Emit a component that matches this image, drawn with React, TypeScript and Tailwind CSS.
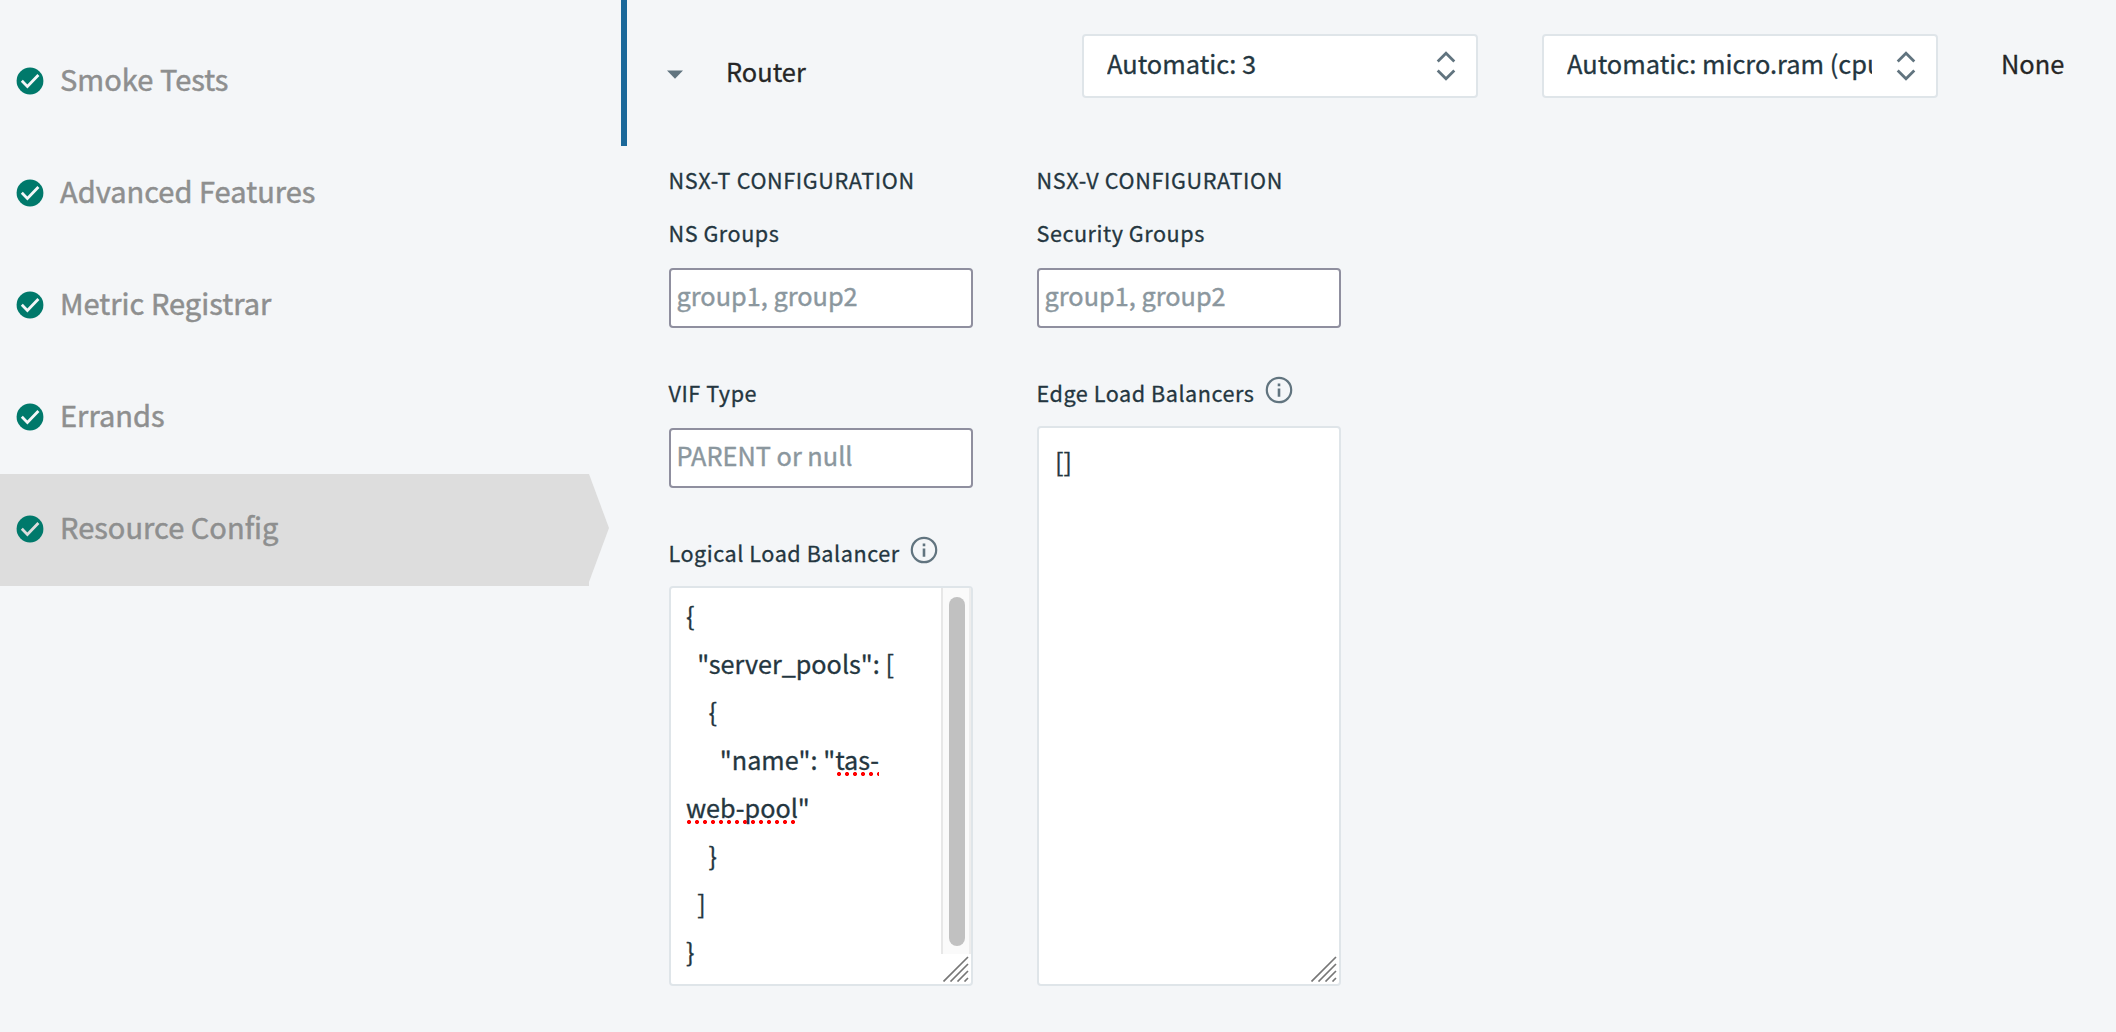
import React from "react";

const steps = [
  { label: "Smoke Tests" },
  { label: "Advanced Features" },
  { label: "Metric Registrar" },
  { label: "Errands" },
  { label: "Resource Config", active: true },
];

function CheckBadge({ active }: { active?: boolean }) {
  return (
    <svg className="mt-[41px] ml-4 size-7 shrink-0" viewBox="-14 -14 28 28" fill="none">
      <circle r="13.4" fill="#00796b" />
      <path d="M-8.2-.2-2.6 5.4 8.4-6" stroke={active ? "#dddddd" : "#f4f6f8"} strokeWidth="2.8" />
    </svg>
  );
}

function Sidebar() {
  return (
    <nav className="w-[621px] shrink-0 pt-[26px]">
      {steps.map((s) => (
        <div key={s.label} className="flex h-28 text-[29px] leading-10 tracking-[0.03px] text-[#8e8f8f] [-webkit-text-stroke:0.5px_#8e8f8f]">
          <div className={s.active ? "flex w-[589px] bg-[#dddddd]" : "flex w-[589px]"}>
            <CheckBadge active={s.active} />
            <span className="ml-4 pt-8">{s.label}</span>
          </div>
          {s.active && (
            <svg className="h-28 w-5" viewBox="0 0 20 112">
              <path d="M0 0 20 54 0 108Z" fill="#dddddd" />
            </svg>
          )}
        </div>
      ))}
    </nav>
  );
}

function Select({ value }: { value: string }) {
  return (
    <div className="flex h-16 w-[396px] shrink-0 rounded border-2 border-[#dfe5e9] bg-white pl-[23px] text-[#243640]">
      <div className="w-[305px] overflow-hidden pt-[3px] whitespace-nowrap">{value}</div>
      <svg className="mt-3.5 ml-6 h-8 w-5" viewBox="0 0 20 32" fill="none" stroke="#61747f" strokeWidth="2.8">
        <path d="M1.7 11.4 10 3.3 18.3 11.4M1.7 20.6 10 28.7 18.3 20.6" />
      </svg>
    </div>
  );
}

function Label({ children, info }: { children: string; info?: boolean }) {
  return (
    <div className="-ml-[0.5px] flex h-[31px] text-[21.6px] leading-[31px] tracking-[0.54px]">
      {children}
      {info && (
        <svg className="-mt-px ml-[10px] size-7" viewBox="-14 -14 28 28" fill="none" stroke="#61747f">
          <circle r="12.2" strokeWidth="2.2" />
          <path d="M0-6.6V-3.8M0-1.6V6.7" strokeWidth="2.6" />
        </svg>
      )}
    </div>
  );
}

function Heading({ children }: { children: string }) {
  return <div className="-ml-[0.5px] h-[31px] text-[21.6px] leading-[31px] tracking-[0.64px]">{children}</div>;
}

function Input({ placeholder }: { placeholder: string }) {
  return (
    <div className="mt-5 h-[60px] rounded border-2 border-[#8f8f9f] bg-white pt-px pl-[5.5px] text-[25.3px] leading-[48px] text-[#8b979e] [-webkit-text-stroke:0.4px_#8b979e]">
      {placeholder}
    </div>
  );
}

function Grip() {
  return (
    <svg className="absolute right-0.5 bottom-0.5 size-[26px]" viewBox="0 0 26 26" stroke="#777777" strokeWidth="1.7">
      <path d="M.5 25.5 25 1M7.5 25.5 25 8M14.5 25.5 25 15M21.5 25.5 25 22" />
    </svg>
  );
}

function Code() {
  const dots = "bg-[radial-gradient(circle_at_2px_2px,#ff0000_1.8px,transparent_2.3px)] bg-size-[8px_4px] bg-repeat-x";
  return (
    <div className="pl-[15px] text-[25.2px] leading-[48px] whitespace-pre">
      <div>{"{"}</div>
      <div>{'  "server_pools": ['}</div>
      <div>{"    {"}</div>
      <div>
        {'      "name": "'}
        <span className={dots + " bg-position-[2px_31px]"}>tas-</span>
      </div>
      <div>
        <span className={dots + " bg-position-[1px_31px]"}>web-pool</span>
        {'"'}
      </div>
      <div>{"    }"}</div>
      <div>{"  ]"}</div>
      <div>{"}"}</div>
    </div>
  );
}

export default function App() {
  return (
    <div className="flex h-[1032px] w-[2116px] overflow-hidden bg-[#f4f6f8] font-['Noto_Sans_CJK_SC',sans-serif] text-[#243640] [-webkit-text-stroke:0.3px]">
      <Sidebar />
      <main className="min-w-0 flex-1">
        <header className="flex h-[146px] border-l-[6px] border-[#1a6899] text-[25.4px] leading-[48px] text-[#262626]">
          <svg className="mt-[70px] ml-10 h-[9px] w-4 shrink-0" viewBox="0 0 16 9">
            <path d="M0 .5H16L8 8.8Z" fill="#61747f" />
          </svg>
          <div className="ml-[43px] w-[356px] shrink-0 pt-[47px]">Router</div>
          <div className="flex gap-16 pt-[34px]">
            <Select value="Automatic: 3" />
            <Select value="Automatic: micro.ram (cpu: 1" />
            <div className="-ml-px pt-[5px]">None</div>
          </div>
        </header>
        <section className="flex gap-16 pt-[18px] pl-12">
          <div className="w-[304px]">
            <Heading>NSX-T CONFIGURATION</Heading>
            <div className="mt-[22px]">
              <Label>NS Groups</Label>
              <Input placeholder="group1, group2" />
            </div>
            <div className="mt-[49px]">
              <Label>VIF Type</Label>
              <Input placeholder="PARENT or null" />
            </div>
            <div className="mt-[49px]">
              <Label info>Logical Load Balancer</Label>
              <div className="relative mt-[18px] flex h-[400px] justify-between rounded border-2 border-[#dfe5e9] bg-white">
                <div className="pt-[3px]">
                  <Code />
                </div>
                <div className="h-[366px] w-[30px] border-x-2 border-l-[#e7e7e7] border-r-[#ededed] bg-[#fafafa] pr-1 pl-1.5 pt-[9px]">
                  <div className="h-[349px] w-4 rounded-full bg-[#c1c1c1]" />
                </div>
                <Grip />
              </div>
            </div>
          </div>
          <div className="w-[304px]">
            <Heading>NSX-V CONFIGURATION</Heading>
            <div className="mt-[22px]">
              <Label>Security Groups</Label>
              <Input placeholder="group1, group2" />
            </div>
            <div className="mt-[49px]">
              <Label info>Edge Load Balancers</Label>
              <div className="relative mt-[18px] h-[560px] rounded border-2 border-[#dfe5e9] bg-white pt-[9px] pl-4 text-[25.2px] leading-[48px]">
                []
                <Grip />
              </div>
            </div>
          </div>
        </section>
      </main>
    </div>
  );
}
